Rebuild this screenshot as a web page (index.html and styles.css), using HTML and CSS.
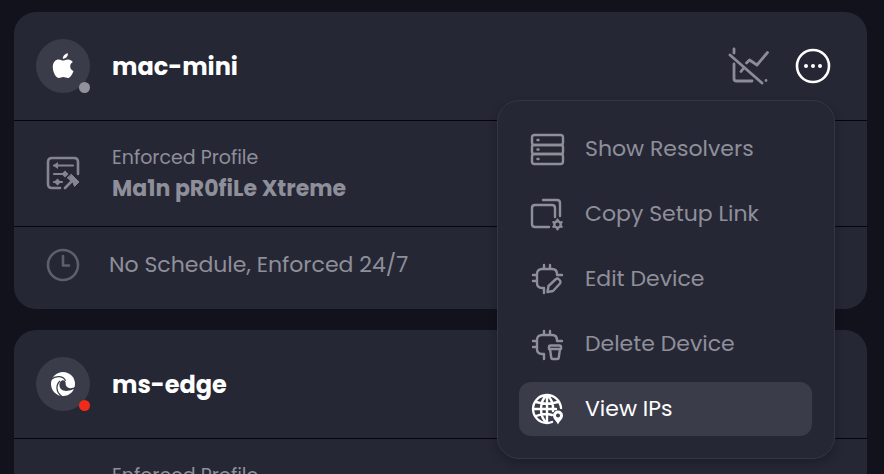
FILE: index.html
```
<!DOCTYPE html>
<html lang="en">

<head>
  <meta charset="UTF-8">
  <meta name="viewport" content="width=device-width, initial-scale=1.0">
  <title>Devices</title>
  <link rel="stylesheet" href="styles.css">
</head>

<body>
  <main class="device-list">
    <article class="card">
      <header class="card-header">
        <div class="avatar">
          <svg width="22" height="26" viewBox="0 0 22 26" fill="#fff" aria-hidden="true">
            <path d="M11 7.5C12.8 7.5 13.8 6.4 16 6.4C18 6.4 19.8 7.4 20.8 8.9C17 11.1 17.5 16.3 21.5 17.9C20.2 21.5 18 25 15.8 25C14 25 13.2 24 11.3 24C9.4 24 8.5 25 6.9 25C4 25 .8 19.3 .8 14C.8 9 3.6 6.4 6.7 6.4C8.6 6.4 9.8 7.5 11 7.5Z" />
            <path d="M10.8 5.8C10.7 2.9 13.2 .7 15.9 .3C16.2 3.3 13.8 5.8 10.8 5.8Z" />
          </svg>
          <span class="status"></span>
        </div>
        <h2 class="device-name">mac-mini</h2>
        <div class="actions">
          <button class="icon-button" type="button" aria-label="Analytics off">
            <svg width="42" height="40" viewBox="0 0 42 40" fill="none" stroke="#8c8c98" stroke-width="2.8" stroke-linecap="round" stroke-linejoin="round" aria-hidden="true">
              <path d="M6 3V7M6 18V32.500Q6 35 8.500 35H24M38 34.500V34.600M13 25.500L15 23M18.500 17L21.500 14L29 19L39.500 6.500M2 9L34 37" />
            </svg>
          </button>
          <div class="menu-wrap">
            <button class="icon-button" type="button" aria-label="More" aria-expanded="true">
              <svg width="36" height="36" viewBox="0 0 36 36" aria-hidden="true">
                <circle cx="18" cy="18" r="16" fill="none" stroke="#fff" stroke-width="2.6" />
                <g fill="#fff">
                  <circle cx="11" cy="18" r="2" />
                  <circle cx="18" cy="18" r="2" />
                  <circle cx="25" cy="18" r="2" />
                </g>
              </svg>
            </button>

            <div class="menu">
              <button class="menu-item" type="button">
                <svg class="menu-icon" viewBox="0 0 36 36" aria-hidden="true">
                  <rect x="3" y="4" width="31" height="10" rx="2.5" />
                  <rect x="3" y="14" width="31" height="9" rx="2" />
                  <rect x="3" y="23" width="31" height="10" rx="2.5" />
                  <path d="M8.500 9H9.500M8.500 18.500H9.500M8.500 28H9.500" />
                </svg>
                <span>Show Resolvers</span>
              </button>
              <button class="menu-item" type="button">
                <svg class="menu-icon" viewBox="0 0 36 36" aria-hidden="true">
                  <path d="M26 21V12Q26 9 23 9H6Q3 9 3 12V28Q3 31 6 31H20M14 4H28Q31 4 31 7V20" />
                  <circle cx="28.5" cy="28.5" r="3.2" />
                  <path d="M28.500 24.500V23.800M28.500 32.500V33.200M25 26.500L24.400 26.200M32 30.500L32.600 30.800M32 26.500L32.600 26.200M25 30.500L24.400 30.800" />
                </svg>
                <span>Copy Setup Link</span>
              </button>
              <button class="menu-item" type="button">
                <svg class="menu-icon" viewBox="0 0 36 36" aria-hidden="true">
                  <path d="M15 32V27H13Q8 27 8 22V13Q8 8 13 8H23Q28 8 28 13V14H33M15 8V4M21 8V4M8 14H4M8 20H4" />
                  <path d="M18.500 31L19.500 25L27 18Q28.500 17 30 18.500L31 19.500Q32 21 31 22.500L24 30Z" />
                </svg>
                <span>Edit Device</span>
              </button>
              <button class="menu-item" type="button">
                <svg class="menu-icon" viewBox="0 0 36 36" aria-hidden="true">
                  <path d="M15 33V28H13Q8 28 8 23V14Q8 9 13 9H23Q28 9 28 14V15H33M15 9V5M21 9V5M8 15H4M8 21H4" />
                  <path d="M20 21Q20 19.500 21.500 19.500H30.500Q32 19.500 32 21V23H20ZM21 23L22.300 32Q22.500 33 23.500 33H28.500Q29.500 33 29.700 32L31 23" />
                </svg>
                <span>Delete Device</span>
              </button>
              <button class="menu-item active" type="button">
                <svg class="menu-icon" viewBox="0 0 36 36" aria-hidden="true">
                  <path d="M23 31Q20.500 32 18 32A14 14 0 1 1 32 17M4 18H27M7 11Q18 14.500 29 11M7 25Q16 21.500 23 24M18 4C10 10 10 26 18 32M18 4C23 8 24.500 14 24 20M18 4V32" />
                  <path fill="#fff" stroke="none" fill-rule="evenodd" d="M29 19.500A5 5 0 0 1 34 24.500C34 28 30.500 30 29 33.500C27.500 30 24 28 24 24.500A5 5 0 0 1 29 19.500ZM29 22.500A2 2 0 1 0 29 26.500A2 2 0 1 0 29 22.500Z" />
                </svg>
                <span>View IPs</span>
              </button>
            </div>
          </div>
        </div>
      </header>

      <section class="card-row profile">
        <div class="row-icon">
          <svg width="36" height="36" viewBox="0 0 36 36" fill="none" stroke="#858591" stroke-width="2.6" stroke-linecap="round" stroke-linejoin="round" aria-hidden="true">
            <path d="M33 19V7Q33 3 29 3H7Q3 3 3 7V29Q3 33 7 33H15" />
            <path stroke-width="2.2" d="M9 10.500H28M9 19H19M9 27H17" />
            <path fill="#858591" stroke="none" d="M8 10.500L13 7V14ZM20 15.500L23.500 19L20 22.500L16.500 19ZM12.500 23.500L16 27L12.500 30.500L9 27Z" />
            <path d="M20 33L27 26" />
            <path fill="#858591" stroke-width="1" d="M26.500 19.500L34 27L29.500 31.500L28 27.500L22.500 23Z" />
          </svg>
        </div>
        <div>
          <p class="label">Enforced Profile</p>
          <p class="profile-name">Ma1n pR0fiLe Xtreme</p>
        </div>
      </section>

      <section class="card-row schedule">
        <div class="row-icon">
          <svg width="36" height="36" viewBox="0 0 36 36" fill="none" stroke="#5e5f6c" stroke-width="2.6" stroke-linecap="round" stroke-linejoin="round" aria-hidden="true">
            <circle cx="18" cy="18" r="15" />
            <path d="M18 9V18.500H24" />
          </svg>
        </div>
        <p>No Schedule, Enforced 24/7</p>
      </section>
    </article>

    <article class="card">
      <header class="card-header">
        <div class="avatar">
          <svg width="26" height="26" viewBox="0 0 26 26" aria-hidden="true">
            <circle cx="13" cy="13" r="12" fill="#fff" />
            <path fill="#3b3c49" d="M25.500 15.500C22 18.200 16.500 17.500 15.800 14C15.500 12.300 16 11.200 14.800 10C12.500 8 8.800 11 9.500 15C10.200 19.500 15.500 21.500 22.500 18.500L26 18Z" />
            <path fill="none" stroke="#3b3c49" stroke-width="1.3" d="M1 8.500C6 4 14 5 15.500 10M10 10C5.500 14 6 21 11.500 25" />
          </svg>
          <span class="status offline"></span>
        </div>
        <h2 class="device-name">ms-edge</h2>
      </header>
      <section class="card-row profile">
        <div class="row-icon"></div>
        <p class="label">Enforced Profile</p>
      </section>
    </article>
  </main>
</body>

</html>
```
FILE: styles.css
```
* {
  box-sizing: border-box;
}

body {
  margin: 0;
  height: 100vh;
  overflow: hidden;
  background: #12121c;
  color: #8f8f9a;
  font-family: Poppins, Inter, "Open Sans", sans-serif;
}

h2,
p {
  margin: 0;
}

button {
  border: none;
  padding: 0;
  background: none;
  color: inherit;
  font: inherit;
  cursor: pointer;
}

svg {
  display: block;
  flex-shrink: 0;
}

.device-list {
  display: flex;
  flex-direction: column;
  gap: 21px;
  padding: 12px 17px 0 14px;
}

.card {
  background: #262735;
  border-radius: 22px;
}

.card-header,
.card-row {
  display: flex;
  align-items: center;
  gap: 22px;
  padding: 0 22px;
}

.card-header {
  height: 108px;
  padding-right: 36px;
}

.card-row {
  border-top: 1px solid #05050b;
}

.avatar {
  position: relative;
  display: flex;
  align-items: center;
  justify-content: center;
  width: 54px;
  height: 54px;
  border-radius: 50%;
  background: #3b3c49;
}

.status {
  position: absolute;
  right: 0;
  bottom: 0;
  width: 11px;
  height: 11px;
  border-radius: 50%;
  background: #92929d;
}

.status.offline {
  background: #f02b19;
}

.device-name {
  padding-top: 2px;
  color: #fff;
  font-size: 24px;
  font-weight: 700;
  line-height: 36px;
}

.actions {
  display: flex;
  align-items: center;
  gap: 25px;
  margin-left: auto;
}

.row-icon {
  display: flex;
  justify-content: center;
  width: 54px;
}

.profile {
  padding-top: 21px;
  padding-bottom: 22px;
}

.label {
  font-size: 19px;
  line-height: 31px;
}

.profile-name {
  font-size: 22px;
  font-weight: 700;
  line-height: 31px;
}

.schedule {
  gap: 19px;
  padding-top: 20px;
  padding-bottom: 26px;
  font-size: 22px;
  line-height: 36px;
}

.menu-wrap {
  position: relative;
  display: flex;
}

.menu {
  position: absolute;
  top: 52px;
  right: -4px;
  z-index: 1;
  display: flex;
  flex-direction: column;
  gap: 11px;
  width: 338px;
  padding: 21px 22px 22px 21px;
  border: 1px solid #353643;
  border-radius: 22px;
  background: #262735;
  box-shadow: 0 4px 8px rgba(10, 10, 20, 0.3);
}

.menu-item {
  display: flex;
  align-items: center;
  gap: 20px;
  height: 54px;
  padding: 0 10px;
  border-radius: 12px;
  font-size: 22px;
  line-height: 32px;
  text-align: left;
}

.menu-item:hover,
.menu-item.active {
  background: #3b3c49;
  color: #fff;
}

.menu-icon {
  width: 36px;
  height: 36px;
  fill: none;
  stroke: currentColor;
  stroke-width: 2.4;
  stroke-linecap: round;
  stroke-linejoin: round;
}
```
